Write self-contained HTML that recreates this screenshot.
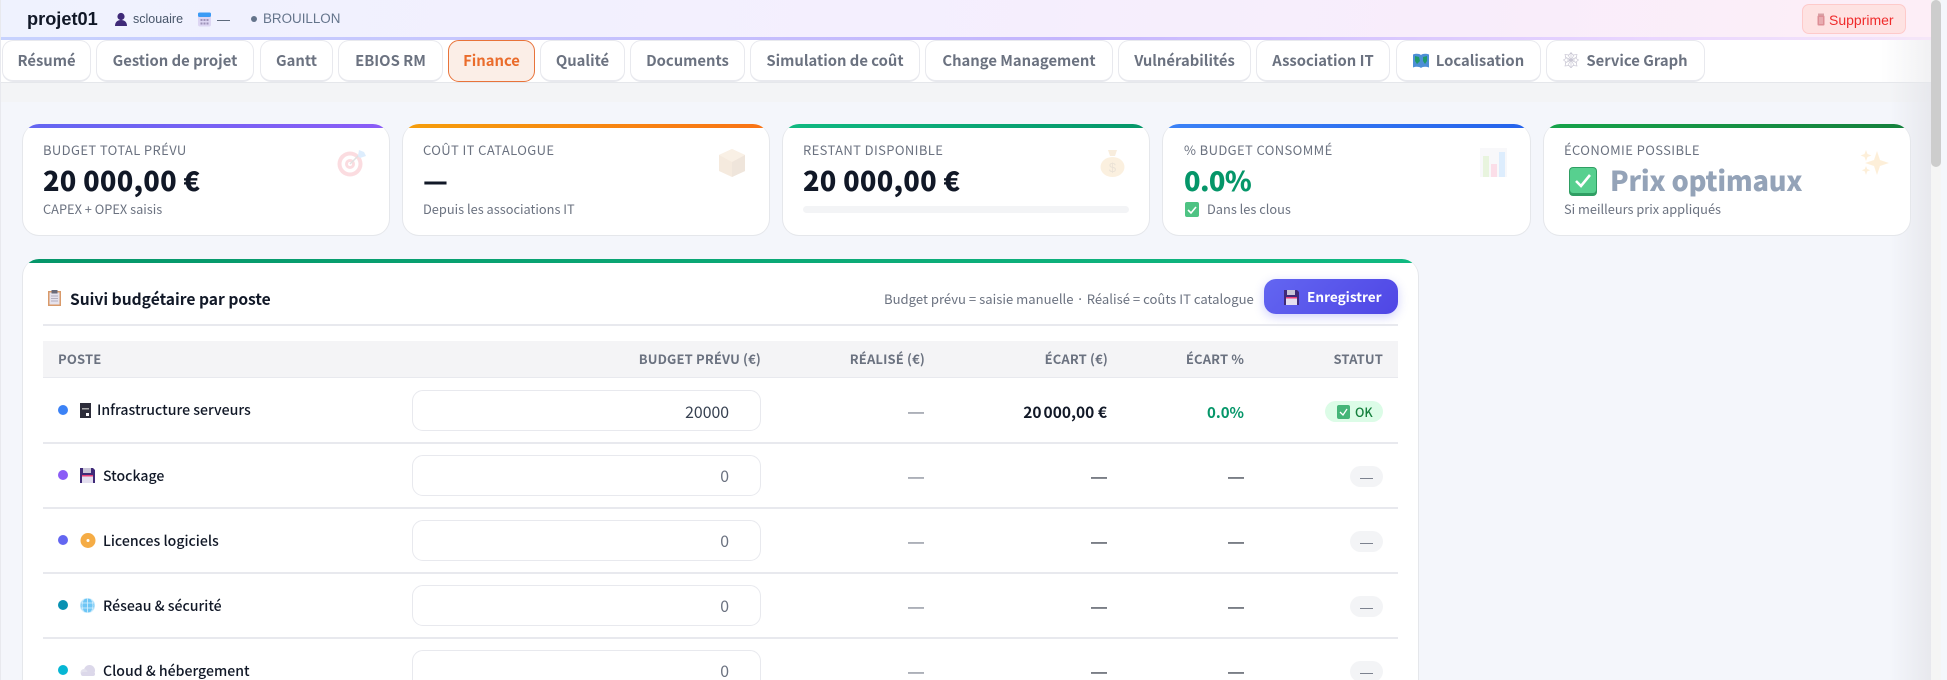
<!DOCTYPE html>
<html lang="fr"><head><meta charset="utf-8"><title>projet01</title>
<style>
*{box-sizing:border-box}
html,body{margin:0;padding:0;width:1947px;height:680px;overflow:hidden;background:#f4f6fb}
body{position:relative;font-family:"Noto Sans CJK JP","Liberation Sans",sans-serif;color:#111827}
.a{position:absolute;white-space:nowrap;line-height:1}
.ar{font-family:"Liberation Sans",Arial,sans-serif}
.tab{position:absolute;top:40px;height:42px;background:#fff;border:1px solid #e8e9ee;border-bottom:2px solid #e8e9ee;border-radius:11px;color:#6b7280;font-weight:700;font-size:14.8px;display:flex;align-items:center;justify-content:center;white-space:nowrap;padding-bottom:1px}
.tab svg{margin-right:7px}
.card{position:absolute;top:124px;height:112px;background:#fff;border:1px solid #e5e7eb;border-radius:17px;overflow:hidden;border-top:0}
.card i{position:absolute;left:0;right:0;top:0;height:4px;display:block}
.lbl{font-size:13px;color:#6b7280;letter-spacing:.38px;top:143px}
.val{font-size:27.2px;font-weight:900;top:166px;letter-spacing:.25px}
.sub{font-size:12.8px;color:#6b7280;top:203px}
.ic{position:absolute;opacity:.17}
.th{font-size:13px;font-weight:700;color:#6b7280;top:352px;letter-spacing:.15px}
.hl{position:absolute;left:43px;width:1355px;height:1.5px;background:#e8e9ee}
.dot{position:absolute;left:58px;width:10px;height:10px;border-radius:50%}
.nm{font-size:14.1px;font-weight:500;color:#111827}
.inp{position:absolute;left:412px;width:349px;height:41px;border:1.5px solid #e8e9ee;border-radius:11px;background:#fff}
.iv{font-size:15.8px;color:#6b7280}
.d1{font-family:"Liberation Sans",sans-serif;font-size:16px;color:#6b7280;text-align:right}
.d2{font-size:15.5px;font-weight:700;color:#111827;text-align:right}
.d3{font-family:"Liberation Sans",sans-serif;font-size:16px;color:#111827;text-align:right}
.bd{position:absolute;left:1350px;width:33px;height:21px;background:#f3f4f6;border-radius:11px;font-family:"Liberation Sans",sans-serif;font-size:13px;color:#6b7280;text-align:center;line-height:23px}
</style></head><body>

<!-- Header -->
<div style="position:absolute;left:0;top:0;width:1931px;height:40px;background:linear-gradient(100deg,#eff2fe 0%,#f4effe 45%,#f8edfb 75%,#fdeef7 100%)"></div>
<div style="position:absolute;left:0;top:37px;width:1931px;height:3px;background:linear-gradient(90deg,#c7d2fe,#c4b5fd 55%,#e9d5ff 85%,#f5e6f8)"></div>
<div style="position:absolute;left:0;top:0;width:1px;height:680px;background:#e8e9ee"></div>

<div class="a ar" style="left:27px;top:10px;font-size:18.2px;font-weight:700;color:#111827">projet01</div>
<svg class="a" style="left:114px;top:12px" width="14" height="15" viewBox="0 0 14 15"><circle cx="7" cy="4.5" r="3.6" fill="#3f2a78"/><path d="M1 14c0-4 2.5-6 6-6s6 2 6 6z" fill="#3f2a78"/></svg>
<div class="a ar" style="left:133px;top:13px;font-size:12.5px;color:#475569">sclouaire</div>
<svg class="a" style="left:198px;top:12px" width="13" height="15" viewBox="0 0 13 15"><rect x="0" y="0.5" width="13" height="14" rx="2" fill="#ddd6f3"/><rect x="0" y="0.5" width="13" height="4.5" rx="1.5" fill="#3b9bf5"/><g fill="#9d93b8"><rect x="2.5" y="7" width="2" height="2"/><rect x="5.5" y="7" width="2" height="2"/><rect x="8.5" y="7" width="2" height="2"/><rect x="2.5" y="10.5" width="2" height="2"/><rect x="5.5" y="10.5" width="2" height="2"/><rect x="8.5" y="10.5" width="2" height="2"/></g></svg>
<div class="a ar" style="left:217px;top:13px;font-size:13px;color:#475569">—</div>
<div class="a" style="left:251px;top:16px;width:6px;height:6px;border-radius:50%;background:#64748b"></div>
<div class="a ar" style="left:263px;top:12px;font-size:13.4px;color:#64748b">BROUILLON</div>

<div style="position:absolute;left:1802px;top:4px;width:104px;height:30px;background:#fee2e2;border:1px solid #fecaca;border-radius:7px"></div>
<svg class="a" style="left:1817px;top:13px" width="8" height="13" viewBox="0 0 8 13"><rect x="1" y="0.5" width="6" height="2" fill="#d9a0a5"/><rect x="0.5" y="2.5" width="7" height="10" rx="1" fill="#dd8f96"/><path d="M3 4v7M5 4v7" stroke="#f3c7ca"/></svg>
<div class="a ar" style="left:1829px;top:13px;font-size:14px;color:#ef2b2b">Supprimer</div>

<!-- Tabs row -->
<div style="position:absolute;left:1px;top:40px;width:1930px;height:43px;background:linear-gradient(90deg,#fff 0,#fff 1880px,#f1f1f3 1930px);border-bottom:1px solid #e5e7eb"></div>
<div class="tab" style="left:2px;width:89px">Résumé</div>
<div class="tab" style="left:96px;width:158px">Gestion de projet</div>
<div class="tab" style="left:260px;width:73px">Gantt</div>
<div class="tab" style="left:338px;width:105px">EBIOS RM</div>
<div class="tab" style="left:448px;width:87px;background:#fbeee7;border:1px solid #e8733a;color:#ea6c2c">Finance</div>
<div class="tab" style="left:540px;width:85px">Qualité</div>
<div class="tab" style="left:630px;width:115px">Documents</div>
<div class="tab" style="left:750px;width:170px">Simulation de coût</div>
<div class="tab" style="left:925px;width:188px">Change Management</div>
<div class="tab" style="left:1118px;width:133px">Vulnérabilités</div>
<div class="tab" style="left:1256px;width:134px">Association IT</div>
<div class="tab" style="left:1396px;width:145px"><svg width="16" height="15" viewBox="0 0 16 15"><path d="M0 1.500c3-1 6-1 8 .500 2-1.500 5-1.500 8-.500v13c-3-1-6-1-8 .500-2-1.500-5-1.500-8-.500z" fill="#4d8fd6"/><path d="M2 3l4 1 1 4-3 3-2-3zM10 4l4-1v5l-2 3-2-3z" fill="#1f9a6a"/></svg>Localisation</div>
<div class="tab" style="left:1546px;width:159px"><svg width="16" height="16" viewBox="0 0 16 16" fill="none" stroke="#c9c7d4" stroke-width=".7"><path d="M8 .500l2 2.500 4-.500-1 4 2.500 1.500-2.500 2 1 4-4-.500-2 2.500-2-2.500-4 .500 1-4L.500 8 3 6.500l-1-4 4 .500zM2 5l12 6M14 5L2 11M8 1v14M4 8h8M5 3l6 10M11 3L5 13"/></svg>Service Graph</div>

<!-- Strip -->
<div style="position:absolute;left:1px;top:83px;width:1930px;height:19px;background:#f3f4f6"></div>
<!-- right fade -->
<div style="position:absolute;left:1890px;top:83px;width:41px;height:597px;background:linear-gradient(90deg,rgba(230,231,236,0),rgba(230,231,236,.9))"></div>

<!-- Cards -->
<div class="card" style="left:22px;width:368px"><i style="background:linear-gradient(90deg,#6366f1,#8b5cf6)"></i></div>
<div class="card" style="left:402px;width:368px"><i style="background:linear-gradient(90deg,#f59e0b,#f97316)"></i></div>
<div class="card" style="left:782px;width:368px"><i style="background:linear-gradient(90deg,#10b981,#059669)"></i></div>
<div class="card" style="left:1162px;width:369px"><i style="background:linear-gradient(90deg,#3b82f6,#2563eb)"></i></div>
<div class="card" style="left:1543px;width:368px"><i style="background:linear-gradient(90deg,#16a34a,#15803d)"></i></div>

<div class="a lbl" style="left:43px">BUDGET TOTAL PRÉVU</div>
<div class="a val" style="left:43px">20 000,00 €</div>
<div class="a sub" style="left:43px">CAPEX + OPEX saisis</div>
<svg class="ic" style="left:337px;top:149px" width="30" height="28" viewBox="0 0 30 28"><circle cx="13" cy="15" r="12.5" fill="#e8364f"/><circle cx="13" cy="15" r="8.5" fill="#fff"/><circle cx="13" cy="15" r="5" fill="#e8364f"/><circle cx="13" cy="15" r="2" fill="#fff"/><path d="M13 15L23 5" stroke="#555" stroke-width="1.5"/><path d="M21 7l1-6 5 2 2 4-6 2z" fill="#3b9bf5"/></svg>

<div class="a lbl" style="left:423px">COÛT IT CATALOGUE</div>
<div class="a val" style="left:423px">—</div>
<div class="a sub" style="left:423px">Depuis les associations IT</div>
<svg class="ic" style="left:719px;top:149px" width="26" height="28" viewBox="0 0 26 28"><path d="M13 0l13 6v16l-13 6-13-6V6z" fill="#c68642"/><path d="M13 13l13-7v16l-13 6z" fill="#a5692e"/><path d="M13 0l13 6-13 7L0 6z" fill="#e0a868"/></svg>

<div class="a lbl" style="left:803px">RESTANT DISPONIBLE</div>
<div class="a val" style="left:803px">20 000,00 €</div>
<div style="position:absolute;left:803px;top:206px;width:326px;height:7px;background:#f3f4f6;border-radius:4px"></div>
<svg class="ic" style="left:1100px;top:149px" width="25" height="28" viewBox="0 0 25 28"><path d="M8 1h9l-2 6h-5z" fill="#d99a3d"/><ellipse cx="12.5" cy="18" rx="12" ry="10" fill="#e8ab4a"/><text x="12.5" y="23" font-size="13" text-anchor="middle" fill="#8a5a12" font-family="Liberation Sans">$</text></svg>

<div class="a lbl" style="left:1184px">% BUDGET CONSOMMÉ</div>
<div class="a val" style="left:1184px;color:#059669;letter-spacing:-.6px">0.0%</div>
<svg class="a" style="left:1185px;top:202px" width="14" height="15" viewBox="0 0 14 15"><rect width="14" height="15" rx="2" fill="#4ec383"/><path d="M3 8l3 3 5-6" stroke="#fff" stroke-width="1.6" fill="none"/></svg>
<div class="a sub" style="left:1207px">Dans les clous</div>
<svg class="ic" style="left:1480px;top:148px" width="27" height="29" viewBox="0 0 27 29"><rect width="27" height="29" fill="#dcdce4"/><rect x="3" y="8" width="6" height="21" fill="#7cc243"/><rect x="11" y="16" width="6" height="13" fill="#e8407a"/><rect x="19" y="4" width="6" height="25" fill="#3b9bf5"/></svg>

<div class="a lbl" style="left:1564px">ÉCONOMIE POSSIBLE</div>
<svg class="a" style="left:1569px;top:167px" width="28" height="29" viewBox="0 0 28 29"><rect width="28" height="29" rx="4" fill="#2f9e63"/><rect x="1" y="1" width="26" height="25" rx="3" fill="#57d08f"/><path d="M7 14l5 5 9-11" stroke="#fff" stroke-width="2.6" fill="none"/></svg>
<div class="a val" style="left:1610px;color:#94a3b8;letter-spacing:-.2px">Prix optimaux</div>
<div class="a sub" style="left:1564px">Si meilleurs prix appliqués</div>
<svg class="ic" style="left:1860px;top:149px" width="29" height="28" viewBox="0 0 29 28" fill="#f5a524"><path d="M17 2l3 9 9 3-9 3-3 9-3-9-9-3 9-3z"/><path d="M6 1l1.500 4 4 1.500-4 1.500L6 12l-1.500-4-4-1.500 4-1.500zM6 17l1.200 3 3 1.200-3 1.200L6 26l-1.200-3.600-3-1.200 3-1.200z"/></svg>

<!-- Panel -->
<div style="position:absolute;left:22px;top:259px;width:1397px;height:440px;background:#fff;border:1px solid #e5e7eb;border-top:0;border-radius:17px;overflow:hidden"><div style="height:4px;background:linear-gradient(90deg,#059669,#10b981)"></div></div>
<svg class="a" style="left:48px;top:290px" width="13" height="16" viewBox="0 0 13 16"><rect y="1" width="13" height="15" fill="#d99a6a"/><rect x="1.500" y="2.500" width="10" height="12" fill="#e6e2ec"/><rect x="3.500" y="0" width="6" height="3.500" fill="#6a6a7a"/><path d="M3 6h7M3 8.500h7M3 11h7" stroke="#b3afc0"/></svg>
<div class="a" style="left:70px;top:292px;font-size:15.6px;font-weight:700;color:#111827">Suivi budgétaire par poste</div>
<div class="a" style="left:884px;top:292px;font-size:13.1px;color:#6b7280">Budget prévu = saisie manuelle · Réalisé = coûts IT catalogue</div>
<div style="position:absolute;left:1264px;top:279px;width:134px;height:35px;border-radius:12px;background:linear-gradient(135deg,#6366f1,#4f46e5);box-shadow:0 3px 10px rgba(99,102,241,.3)"></div>
<svg class="a" style="left:1284px;top:290px" width="15" height="15" viewBox="0 0 15 15"><path d="M0 0h13l2 2v13H0z" fill="#3f2a78"/><rect x="3" y="0" width="8" height="5" fill="#c9c5d8"/><rect x="2" y="8" width="11" height="7" fill="#e4dff0"/><rect x="2" y="7" width="11" height="1.500" fill="#e8407a"/></svg>
<div class="a" style="left:1307px;top:290px;font-size:13.6px;font-weight:700;color:#fff">Enregistrer</div>
<div class="hl" style="top:324px;height:2px"></div>

<!-- Table head -->
<div style="position:absolute;left:43px;top:341px;width:1355px;height:37px;background:#f4f4f6;border-bottom:1.5px solid #e8e9ee"></div>
<div class="a th" style="left:58px">POSTE</div>
<div class="a th" style="right:1186px">BUDGET PRÉVU (€)</div>
<div class="a th" style="right:1022px">RÉALISÉ (€)</div>
<div class="a th" style="right:839px">ÉCART (€)</div>
<div class="a th" style="right:703px">ÉCART %</div>
<div class="a th" style="right:564px">STATUT</div>

<div class="hl" style="top:442px"></div><div class="hl" style="top:507px"></div><div class="hl" style="top:572px"></div><div class="hl" style="top:637px"></div>

<!-- Rows -->
<div class="dot" style="top:405px;background:#3b82f6"></div>
<svg class="a" style="left:80px;top:403px" width="11" height="15" viewBox="0 0 11 15"><rect width="11" height="15" fill="#2d2d3a"/><rect x="2" y="5" width="7" height="1.500" fill="#aaa"/><rect x="6" y="10" width="3" height="3" fill="#fff"/></svg>
<div class="a nm" style="left:97px;top:403px">Infrastructure serveurs</div>
<div class="inp" style="top:390px"></div>
<div class="a iv" style="right:1218px;top:404px;color:#374151">20000</div>
<div class="a d1" style="right:1023px;top:405px">—</div>
<div class="a d2" style="right:840px;top:405px"><span style="word-spacing:-1.500px">20 000,00</span> €</div>
<div class="a d2" style="right:703px;top:405px;color:#059669;font-size:15px">0.0%</div>
<div style="position:absolute;left:1325px;top:401px;width:58px;height:21px;background:#dcfce7;border-radius:11px"></div>
<svg class="a" style="left:1337px;top:405px" width="13" height="14" viewBox="0 0 13 14"><rect width="13" height="14" rx="2" fill="#45b578"/><path d="M3 7l3 3 4-6" stroke="#fff" stroke-width="1.300" fill="none"/></svg>
<div class="a" style="left:1355px;top:406px;font-size:12.5px;font-weight:500;color:#15803d">OK</div>

<div class="dot" style="top:470px;background:#8b5cf6"></div>
<svg class="a" style="left:80px;top:468px" width="15" height="15" viewBox="0 0 15 15"><path d="M0 0h13l2 2v13H0z" fill="#3f2a78"/><rect x="3" y="0" width="8" height="5" fill="#c9c5d8"/><rect x="2" y="8" width="11" height="7" fill="#e4dff0"/><rect x="2" y="7" width="11" height="1.500" fill="#e8407a"/></svg>
<div class="a nm" style="left:103px;top:469px">Stockage</div>
<div class="inp" style="top:455px"></div>
<div class="a iv" style="right:1218px;top:468px">0</div>
<div class="a d1" style="right:1023px;top:470px">—</div>
<div class="a d3" style="right:840px;top:470px">—</div>
<div class="a d3" style="right:703px;top:470px">—</div>
<div class="bd" style="top:466px">—</div>

<div class="dot" style="top:535px;background:#6366f1"></div>
<svg class="a" style="left:80px;top:533px" width="16" height="15" viewBox="0 0 16 15"><circle cx="8" cy="7.500" r="7.500" fill="#f5ac45"/><circle cx="8" cy="7.500" r="1.500" fill="#fff"/></svg>
<div class="a nm" style="left:103px;top:534px">Licences logiciels</div>
<div class="inp" style="top:520px"></div>
<div class="a iv" style="right:1218px;top:533px">0</div>
<div class="a d1" style="right:1023px;top:535px">—</div>
<div class="a d3" style="right:840px;top:535px">—</div>
<div class="a d3" style="right:703px;top:535px">—</div>
<div class="bd" style="top:531px">—</div>

<div class="dot" style="top:600px;background:#0891b2"></div>
<svg class="a" style="left:80px;top:598px" width="15" height="15" viewBox="0 0 15 15" fill="#6ec6f5" stroke="#d8f0fd" stroke-width=".8"><circle cx="7.500" cy="7.500" r="7.300"/><path d="M0 5h15M0 10h15M7.500 0v15M3.500 1.500c-2 4-2 8 0 12M11.500 1.500c2 4 2 8 0 12" fill="none"/></svg>
<div class="a nm" style="left:103px;top:599px">Réseau &amp; sécurité</div>
<div class="inp" style="top:585px"></div>
<div class="a iv" style="right:1218px;top:598px">0</div>
<div class="a d1" style="right:1023px;top:600px">—</div>
<div class="a d3" style="right:840px;top:600px">—</div>
<div class="a d3" style="right:703px;top:600px">—</div>
<div class="bd" style="top:596px">—</div>

<div class="dot" style="top:665px;background:#06b6d4"></div>
<svg class="a" style="left:80px;top:665px" width="16" height="11" viewBox="0 0 16 11" fill="#dcd8ea"><circle cx="9.500" cy="5.500" r="5.500"/><circle cx="4" cy="7.500" r="3.500" fill="#e4e2ee"/><rect x="1" y="7" width="14" height="4" rx="2"/></svg>
<div class="a nm" style="left:103px;top:664px">Cloud &amp; hébergement</div>
<div class="inp" style="top:650px"></div>
<div class="a iv" style="right:1218px;top:663px">0</div>
<div class="a d1" style="right:1023px;top:665px">—</div>
<div class="a d3" style="right:840px;top:665px">—</div>
<div class="a d3" style="right:703px;top:665px">—</div>
<div class="bd" style="top:661px">—</div>

<!-- Scrollbar -->
<div style="position:absolute;left:1931px;top:0;width:10px;height:680px;background:#f5f5f5"></div>
<div style="position:absolute;left:1931px;top:0;width:10px;height:167px;background:#cdcdcd;border-radius:5px"></div>
<div style="position:absolute;left:1941px;top:0;width:6px;height:680px;background:#f4f6fb"></div>
</body></html>
